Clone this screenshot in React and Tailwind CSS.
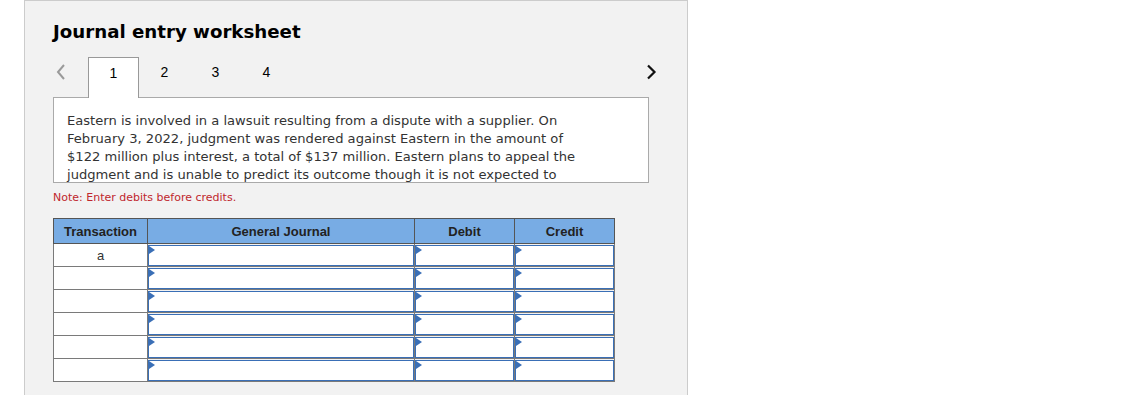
import React from "react";

const rows = ["a", "", "", "", "", ""];

function InputCell() {
  return (
    <td className="p-0 border border-[#7a7a7a] h-[23px]">
      <div className="relative h-[21px] border border-[#3a6fb6] bg-white">
        <span className="absolute left-0 top-0 w-0 h-0 border-y-[4px] border-y-transparent border-l-[6px] border-l-[#3a6fb6]" />
      </div>
    </td>
  );
}

export default function App() {
  return (
    <div className="min-h-[395px] bg-white pl-[24px] overflow-hidden">
      <div className="w-[664px] h-[420px] border border-[#cccccc] bg-[#f2f2f2] pl-[28px] pt-[19px] font-['DejaVu_Sans',sans-serif] text-[#333]">
        <h1 className="text-[18.2px] font-bold text-black leading-[24px]">
          Journal entry worksheet
        </h1>

        {/* tabs */}
        <div className="flex items-end w-[597px] mt-[13px] font-['Liberation_Sans',Arial,sans-serif]">
          <div className="w-[35px] h-[40px] flex items-center pl-[3px] pb-[10px]">
            <svg width="10" height="16" viewBox="0 0 10 16">
              <path d="M8 1 L2 8 L8 15" stroke="#9a9a9a" strokeWidth="2" fill="none" />
            </svg>
          </div>
          <div className="relative z-10 -mb-px w-[51px] h-[41px] border border-b-0 border-[#999] bg-white flex items-center justify-center text-[14px] text-black pb-[10px]">
            1
          </div>
          {["2", "3", "4"].map((t) => (
            <div
              key={t}
              className="w-[51px] h-[40px] flex items-center justify-center text-[14px] text-black pb-[10px]"
            >
              {t}
            </div>
          ))}
          <div className="flex-1 h-[40px] flex items-center justify-end pb-[10px]">
            <svg width="12" height="16" viewBox="0 0 12 16" className="mr-[-8px]">
              <path d="M2 1.5 L8.5 8 L2 14.5" stroke="#111" strokeWidth="2.2" fill="none" />
            </svg>
          </div>
        </div>

        {/* question text */}
        <div className="w-[596px] h-[86px] overflow-hidden border border-[#aaaaaa] bg-white px-[13px] pt-[14px] text-[13.1px] leading-[18px] text-[#333]">
          <div className="w-[518px]">
            Eastern is involved in a lawsuit resulting from a dispute with a supplier. On
            February 3, 2022, judgment was rendered against Eastern in the amount of
            $122 million plus interest, a total of $137 million. Eastern plans to appeal the
            judgment and is unable to predict its outcome though it is not expected to
          </div>
        </div>

        <p className="mt-[8px] text-[11px] leading-[14px] text-[#c0272d]">
          Note: Enter debits before credits.
        </p>

        {/* journal table */}
        <table className="mt-[13px] table-fixed border-collapse w-[562px] font-['Liberation_Sans',Arial,sans-serif]">
          <colgroup>
            <col className="w-[94px]" />
            <col className="w-[267px]" />
            <col className="w-[100px]" />
            <col className="w-[100px]" />
          </colgroup>
          <thead>
            <tr className="h-[25px] bg-[#78ace4] text-[13px] font-bold text-[#222]">
              <th className="border border-[#555] font-bold pt-[1px]">Transaction</th>
              <th className="border border-[#555] font-bold pt-[1px]">General Journal</th>
              <th className="border border-[#555] font-bold pt-[1px]">Debit</th>
              <th className="border border-[#555] font-bold pt-[1px]">Credit</th>
            </tr>
          </thead>
          <tbody>
            {rows.map((r, i) => (
              <tr key={i}>
                <td className="border border-[#7a7a7a] bg-white h-[23px] text-center align-top pt-[5px] text-[13px] leading-[14px] text-[#333]">
                  {r}
                </td>
                <InputCell />
                <InputCell />
                <InputCell />
              </tr>
            ))}
          </tbody>
        </table>
      </div>
    </div>
  );
}
